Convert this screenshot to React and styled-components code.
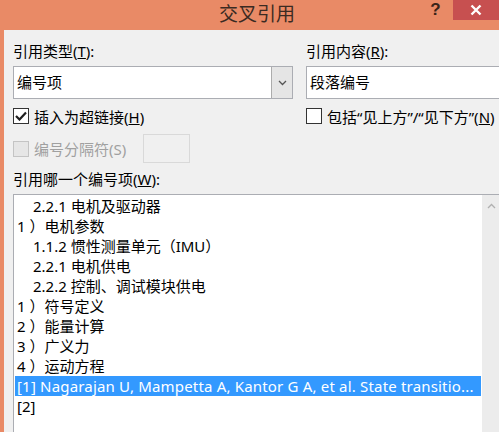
import React from 'react';
import styled, { createGlobalStyle } from 'styled-components';

const GlobalStyle = createGlobalStyle`
  html, body {
    margin: 0;
    padding: 0;
    background: #e98a66;
  }
  body {
    font-family: "Noto Sans", "Noto Sans CJK SC", sans-serif;
  }
`;

// list of numbered items; `num` is the "1）" style prefix
const items = [
  { text: '2.2.1 电机及驱动器', level: 2 },
  { num: '1', text: '电机参数' },
  { text: '1.1.2 惯性测量单元（IMU）', level: 2 },
  { text: '2.2.1 电机供电', level: 2 },
  { text: '2.2.2 控制、调试模块供电', level: 2 },
  { num: '1', text: '符号定义' },
  { num: '2', text: '能量计算' },
  { num: '3', text: '广义力' },
  { num: '4', text: '运动方程' },
  { text: '[1] Nagarajan U, Mampetta A, Kantor G A, et al. State transitio...', selected: true },
  { text: '[2]' },
];

function Chevron({ up }) {
  return (
    <svg width="9" height="6" viewBox="0 0 9 6">
      <polyline
        points={up ? '1,5 4.5,1.5 8,5' : '1,1 4.5,4.5 8,1'}
        fill="none"
        stroke="currentColor"
        strokeWidth="1.3"
      />
    </svg>
  );
}

function App() {
  return (
    <Dialog>
      <GlobalStyle />
      <TitleBar>
        <span />
        <Title>交叉引用</Title>
        <Controls>
          <HelpButton>?</HelpButton>
          <CloseButton>
            <svg width="12" height="12" viewBox="0 0 12 12">
              <path d="M1.5 1.5 L10.5 10.5 M10.5 1.5 L1.5 10.5" stroke="#fff" strokeWidth="2.4" />
            </svg>
          </CloseButton>
        </Controls>
      </TitleBar>

      <Body>
        <Columns>
          <Field>
            <Label>引用类型(<u>T</u>):</Label>
            <Select>
              <SelectText>编号项</SelectText>
              <DropButton><Chevron /></DropButton>
            </Select>
            <Option>
              <CheckBox>
                <svg width="12" height="10" viewBox="0 0 12 10">
                  <polyline points="1,5 4.5,8.5 11,1.5" fill="none" stroke="#1e1e1e" strokeWidth="2.2" />
                </svg>
              </CheckBox>
              <span>插入为超链接(<u>H</u>)</span>
            </Option>
          </Field>
          <Field>
            <Label>引用内容(<u>R</u>):</Label>
            <Select>
              <SelectText>段落编号</SelectText>
              <DropButton><Chevron /></DropButton>
            </Select>
            <Option>
              <CheckBox />
              <span>包括“见上方”/“见下方”(<u>N</u>)</span>
            </Option>
          </Field>
        </Columns>

        <SeparatorRow>
          <Option $disabled>
            <CheckBox $disabled />
            <span>编号分隔符(S)</span>
          </Option>
          <SmallInput />
        </SeparatorRow>

        <Label>引用哪一个编号项(<u>W</u>):</Label>
        <ListBox>
          <Rows>
            {items.map((item, i) => (
              <Row key={i} $level={item.level} $selected={item.selected}>
                {item.num && (
                  <Marker>
                    <span>{item.num}</span>
                    <span>）</span>
                  </Marker>
                )}
                {item.text}
              </Row>
            ))}
          </Rows>
          <ScrollBar>
            <Chevron up />
            <Chevron />
          </ScrollBar>
        </ListBox>
      </Body>
    </Dialog>
  );
}

const Dialog = styled.div`
  width: 499px;
  height: 432px;
  display: flex;
  flex-direction: column;
  background: #e98a66;
  overflow: hidden;
`;

const TitleBar = styled.div`
  height: 30px;
  flex-shrink: 0;
  display: grid;
  grid-template-columns: 1fr auto 1fr;
`;

const Title = styled.div`
  padding-left: 15px;
  font-family: "Noto Sans CJK SC", sans-serif;
  font-size: 19px;
  line-height: 26px;
  color: #3b2a22;
`;

const Controls = styled.div`
  justify-self: end;
  display: flex;
  align-items: flex-start;
`;

const HelpButton = styled.div`
  width: 25px;
  height: 20px;
  margin-right: 5px;
  padding-top: 1px;
  box-sizing: border-box;
  text-align: center;
  font-family: "Liberation Sans", sans-serif;
  font-weight: bold;
  font-size: 17px;
  line-height: 17px;
  color: #3a2418;
`;

const CloseButton = styled.div`
  width: 46px;
  height: 20px;
  background: #c75050;
  display: flex;
  align-items: center;
  justify-content: center;
`;

const Body = styled.div`
  flex: 1;
  margin-left: 4px;
  padding: 11px 0 0 9px;
  background: #f0f0f0;
  display: flex;
  flex-direction: column;
  font-size: 15px;
  color: #000;
  overflow: hidden;
  min-height: 0;
`;

const Columns = styled.div`
  display: grid;
  grid-template-columns: 280px 280px;
  column-gap: 13px;
`;

const Field = styled.div`
  display: flex;
  flex-direction: column;
`;

const Label = styled.div`
  line-height: 20px;
  height: 20px;
  margin-bottom: 5px;
  white-space: nowrap;
`;

const Select = styled.div`
  height: 31px;
  border: 1px solid #abadb3;
  background: #fff;
  display: flex;
`;

const SelectText = styled.div`
  flex: 1;
  padding-left: 3px;
  line-height: 31px;
`;

const DropButton = styled.div`
  width: 20px;
  background: #e5e5e5;
  border-left: 1px solid #acacac;
  color: #555;
  display: flex;
  align-items: center;
  justify-content: center;
`;

const Option = styled.div`
  display: flex;
  align-items: center;
  gap: 5px;
  height: 16px;
  margin-top: 9px;
  white-space: nowrap;
  color: ${p => (p.$disabled ? '#a0a0a0' : '#000')};
  width: ${p => (p.$disabled ? '130px' : 'auto')};
`;

const CheckBox = styled.div`
  width: 14px;
  height: 14px;
  flex-shrink: 0;
  border: 1px solid ${p => (p.$disabled ? '#c4c4c4' : '#333')};
  background: ${p => (p.$disabled ? '#e6e6e6' : '#fff')};
  display: flex;
  align-items: center;
  justify-content: center;
`;

const SeparatorRow = styled.div`
  display: flex;
  align-items: center;
  height: 29px;
  margin-top: 10px;
  margin-bottom: 6px;

  ${Option} {
    margin-top: 0;
  }
`;

const SmallInput = styled.div`
  width: 45px;
  height: 27px;
  border: 1px solid #d9d9d9;
  background: #f0f0f0;
`;

const ListBox = styled.div`
  width: 486px;
  height: 260px;
  flex-shrink: 0;
  border: 1px solid #abadb3;
  background: #fff;
  display: flex;
`;

const Rows = styled.div`
  flex: 1;
  padding: 1px;
  min-width: 0;
`;

const Row = styled.div`
  height: 20px;
  line-height: 20px;
  white-space: nowrap;
  overflow: hidden;
  padding-left: ${p => (p.$level === 2 ? '18px' : '2px')};
  background: ${p => (p.$selected ? '#3399ff' : 'transparent')};
  color: ${p => (p.$selected ? '#fff' : '#000')};
  letter-spacing: ${p => (p.$selected ? '0.18px' : 'normal')};
`;

const Marker = styled.span`
  display: inline-flex;
  gap: 4px;
`;

const ScrollBar = styled.div`
  width: 18px;
  height: 235px;
  background: #ececec;
  color: #b0b0b0;
  display: flex;
  flex-direction: column;
  align-items: center;
  justify-content: space-between;
  padding: 8px 0 5px;
`;

export default App;
